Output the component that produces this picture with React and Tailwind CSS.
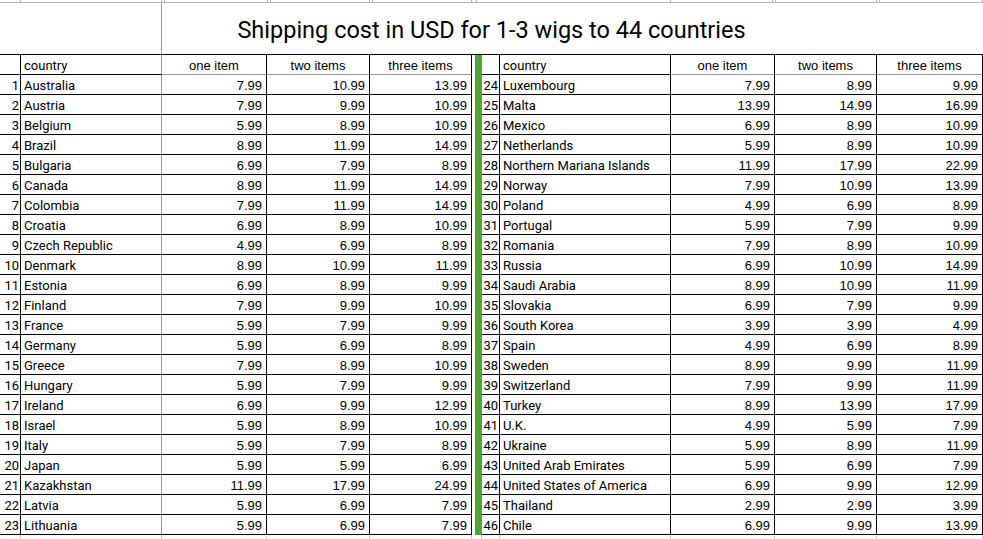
import React from "react";

// ─── Data ─────────────────────────────────────────────────────────────────────
const LEFT = [
  [1, "Australia", "7.99", "10.99", "13.99"],
  [2, "Austria", "7.99", "9.99", "10.99"],
  [3, "Belgium", "5.99", "8.99", "10.99"],
  [4, "Brazil", "8.99", "11.99", "14.99"],
  [5, "Bulgaria", "6.99", "7.99", "8.99"],
  [6, "Canada", "8.99", "11.99", "14.99"],
  [7, "Colombia", "7.99", "11.99", "14.99"],
  [8, "Croatia", "6.99", "8.99", "10.99"],
  [9, "Czech Republic", "4.99", "6.99", "8.99"],
  [10, "Denmark", "8.99", "10.99", "11.99"],
  [11, "Estonia", "6.99", "8.99", "9.99"],
  [12, "Finland", "7.99", "9.99", "10.99"],
  [13, "France", "5.99", "7.99", "9.99"],
  [14, "Germany", "5.99", "6.99", "8.99"],
  [15, "Greece", "7.99", "8.99", "10.99"],
  [16, "Hungary", "5.99", "7.99", "9.99"],
  [17, "Ireland", "6.99", "9.99", "12.99"],
  [18, "Israel", "5.99", "8.99", "10.99"],
  [19, "Italy", "5.99", "7.99", "8.99"],
  [20, "Japan", "5.99", "5.99", "6.99"],
  [21, "Kazakhstan", "11.99", "17.99", "24.99"],
  [22, "Latvia", "5.99", "6.99", "7.99"],
  [23, "Lithuania", "5.99", "6.99", "7.99"],
];

const RIGHT = [
  [24, "Luxembourg", "7.99", "8.99", "9.99"],
  [25, "Malta", "13.99", "14.99", "16.99"],
  [26, "Mexico", "6.99", "8.99", "10.99"],
  [27, "Netherlands", "5.99", "8.99", "10.99"],
  [28, "Northern Mariana Islands", "11.99", "17.99", "22.99"],
  [29, "Norway", "7.99", "10.99", "13.99"],
  [30, "Poland", "4.99", "6.99", "8.99"],
  [31, "Portugal", "5.99", "7.99", "9.99"],
  [32, "Romania", "7.99", "8.99", "10.99"],
  [33, "Russia", "6.99", "10.99", "14.99"],
  [34, "Saudi Arabia", "8.99", "10.99", "11.99"],
  [35, "Slovakia", "6.99", "7.99", "9.99"],
  [36, "South Korea", "3.99", "3.99", "4.99"],
  [37, "Spain", "4.99", "6.99", "8.99"],
  [38, "Sweden", "8.99", "9.99", "11.99"],
  [39, "Switzerland", "7.99", "9.99", "11.99"],
  [40, "Turkey", "8.99", "13.99", "17.99"],
  [41, "U.K.", "4.99", "5.99", "7.99"],
  [42, "Ukraine", "5.99", "8.99", "11.99"],
  [43, "United Arab Emirates", "5.99", "6.99", "7.99"],
  [44, "United States of America", "6.99", "9.99", "12.99"],
  [45, "Thailand", "2.99", "2.99", "3.99"],
  [46, "Chile", "6.99", "9.99", "13.99"],
];

const GRID =
  "grid grid-cols-[21px_141px_105px_103px_102px_10px_18px_171px_104px_102px_106px]";

const narrow = "font-['Roboto','Liberation_Sans',sans-serif] text-[13px]";
const arial = "font-['Liberation_Sans','Arial',sans-serif] text-[13px]";
const cellText = "pt-[2px] leading-[18px]";

// ─── Cells ────────────────────────────────────────────────────────────────────
function Sep() {
  return (
    <div className="h-[20px] pl-[3px]">
      <div className="w-[7px] h-full bg-[#4ea72e]" />
    </div>
  );
}

function Half({ row, sepAfter }) {
  const [n, name, a, b, c] = row;
  const left = n <= 23;
  return (
    <>
      <div className={`h-[20px] border-b border-r border-black text-right pr-[1px] ${cellText} ${narrow}`}>
        {n}
      </div>
      <div
        className={`h-[20px] border-b border-r ${left ? "border-r-[#9a9a9a]" : ""} border-black pl-[3px] whitespace-nowrap overflow-x-hidden ${cellText} ${narrow}`}
      >
        {name}
      </div>
      {[a, b, c].map((v, i) => (
        <div
          key={i}
          className={`h-[20px] border-b border-r border-black text-right pr-[4px] ${cellText} ${arial}`}
        >
          {v}
        </div>
      ))}
      {sepAfter && <Sep />}
    </>
  );
}

function HeaderHalf({ left, sepAfter }) {
  return (
    <>
      <div className="h-[20px] border-b border-r border-black" />
      <div
        className={`h-[20px] border-b border-r border-black ${left ? "border-r-[#9a9a9a]" : ""} pl-[3px] ${cellText} ${narrow}`}
      >
        country
      </div>
      {["one item", "two items", "three items"].map((t) => (
        <div
          key={t}
          className={`h-[20px] border-b border-b-[#9a9a9a] border-r border-black text-center ${cellText} ${arial}`}
        >
          {t}
        </div>
      ))}
      {sepAfter && <Sep />}
    </>
  );
}

// ─── Top strip with double lines ──────────────────────────────────────────────
function TopStrip() {
  const widths = [21, 141, 3, 103, 3, 99, 3, 99, 5, 194, 102, 3, 101, 3, 103];
  return (
    <div className="flex h-[3px] border-b border-[#b5b5b5]">
      {widths.map((w, i) => (
        <div key={i} className="h-full border-r border-[#b5b5b5] shrink-0" style={{ width: w }} />
      ))}
    </div>
  );
}

function BottomStrip() {
  const cols = [21, 141, 105, 103, 102, 10, 18, 171, 104, 102, 106];
  return (
    <div className="flex h-[4px]">
      {cols.map((w, i) => (
        <div key={i} className="h-full border-r border-[#c8c8c8] shrink-0" style={{ width: w }} />
      ))}
    </div>
  );
}

// ─── Main export ──────────────────────────────────────────────────────────────
export default function App() {
  return (
    <div className="w-[983px] h-[539px] bg-white text-black overflow-hidden">
      <TopStrip />

      {/* Title row */}
      <div className="flex h-[52px] border-b border-black">
        <div className="w-[162px] shrink-0 border-r border-[#9a9a9a]" />
        <div className="flex-1 flex items-center justify-center pr-[162px] pt-[5px]">
          <span className="font-['Roboto','Liberation_Sans',sans-serif] text-[23.5px] whitespace-nowrap">
            Shipping cost in USD for 1-3 wigs to 44 countries
          </span>
        </div>
      </div>

      <div className={GRID}>
        <HeaderHalf left sepAfter />
        <HeaderHalf />
        {LEFT.map((row, i) => (
          <React.Fragment key={row[0]}>
            <Half row={row} sepAfter />
            <Half row={RIGHT[i]} />
          </React.Fragment>
        ))}
      </div>

      <BottomStrip />
    </div>
  );
}
